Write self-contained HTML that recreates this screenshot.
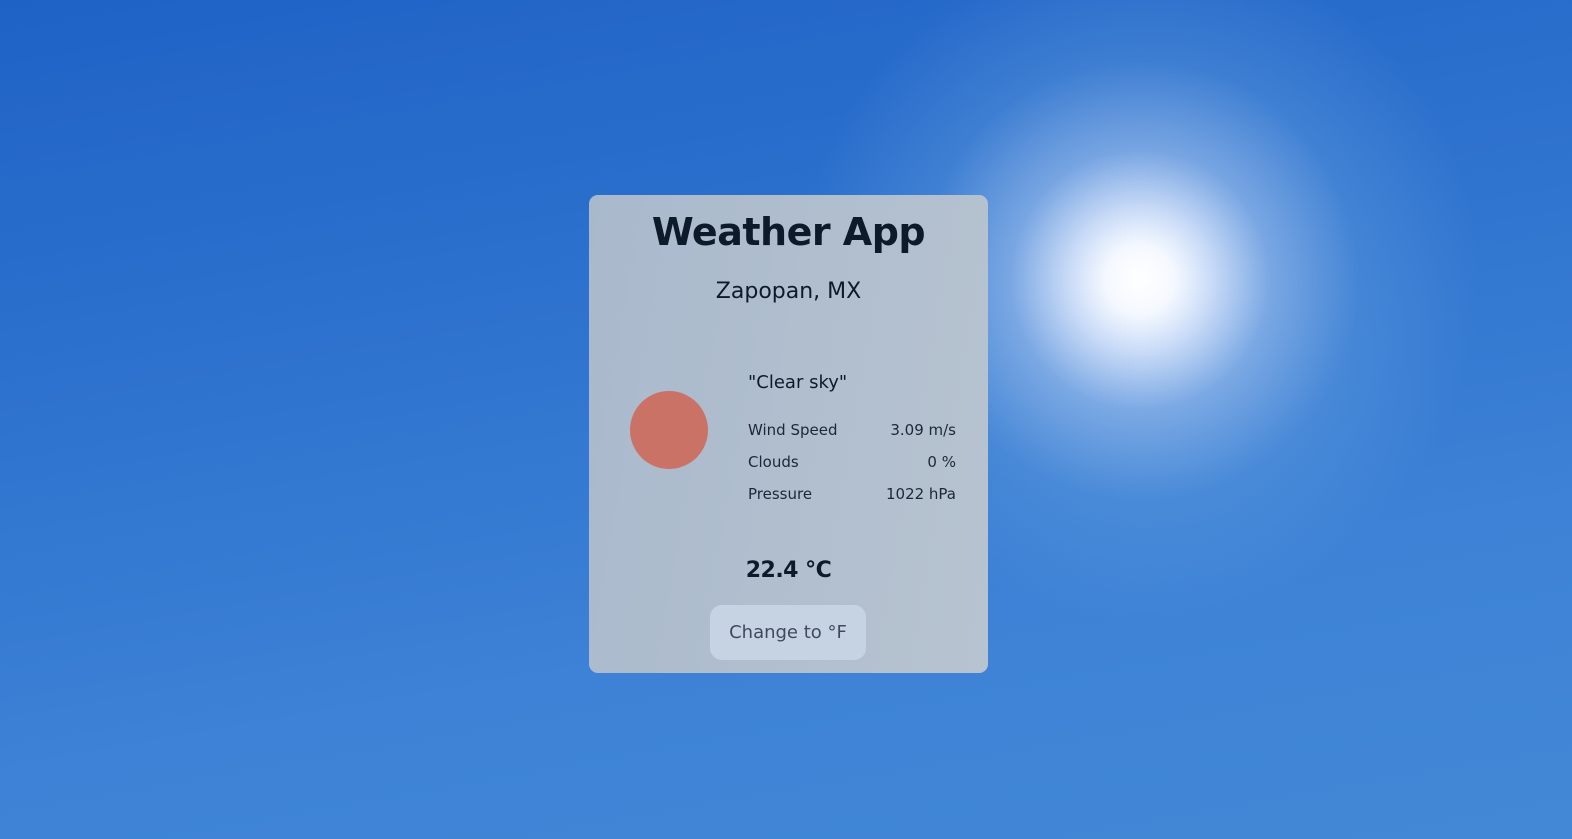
<!DOCTYPE html>
<html><head><style>
html,body{margin:0;padding:0;width:1572px;height:839px;overflow:hidden;font-family:"DejaVu Sans","Liberation Sans",sans-serif;}
body{background:
radial-gradient(circle at 1140px 280px,#ffffff 0,#f4f8ff 35px,rgba(230,238,255,.85) 70px,rgba(170,200,240,.6) 130px,rgba(110,165,225,.3) 220px,rgba(80,140,215,0) 340px),
linear-gradient(170deg,#1f62c6 0%,#2f74cf 40%,#3d82d6 70%,#4388d6 100%);position:relative;}
.card{position:absolute;left:589px;top:195px;width:399px;height:478px;border-radius:9px;background:linear-gradient(100deg,#a9b9cc,#b7c3d0);}
.abs{position:absolute}
</style></head><body>
<div class="card"></div>
<div class="abs" style="top:210px;left:589px;width:399px;text-align:center;font-size:38px;font-weight:600;color:#0d1a2a;letter-spacing:-0.5px">Weather App</div>
<div class="abs" style="top:279px;left:589px;width:399px;text-align:center;font-size:22px;color:#0d1a2a">Zapopan, MX</div>
<div class="abs" style="left:630px;top:391px;width:78px;height:78px;border-radius:50%;background:#c97265"></div>
<div class="abs" style="left:748px;top:372px;font-size:18px;color:#0d1a2a">"Clear sky"</div>
<div class="abs" style="left:748px;top:414px;width:208px;font-size:15px;color:#1c2838;line-height:32px">
<div style="display:flex;justify-content:space-between"><span>Wind Speed</span><span>3.09 m/s</span></div>
<div style="display:flex;justify-content:space-between"><span>Clouds</span><span>0 %</span></div>
<div style="display:flex;justify-content:space-between"><span>Pressure</span><span>1022 hPa</span></div>
</div>
<div class="abs" style="top:558px;left:589px;width:399px;text-align:center;font-size:22px;font-weight:600;color:#0d1a2a;letter-spacing:-0.5px">22.4 °C</div>
<div class="abs" style="left:710px;top:605px;width:156px;height:55px;border-radius:12px;background:#c6d3e3;color:#3f4b5c;font-size:18px;line-height:55px;text-align:center">Change to °F</div>
</body></html>
